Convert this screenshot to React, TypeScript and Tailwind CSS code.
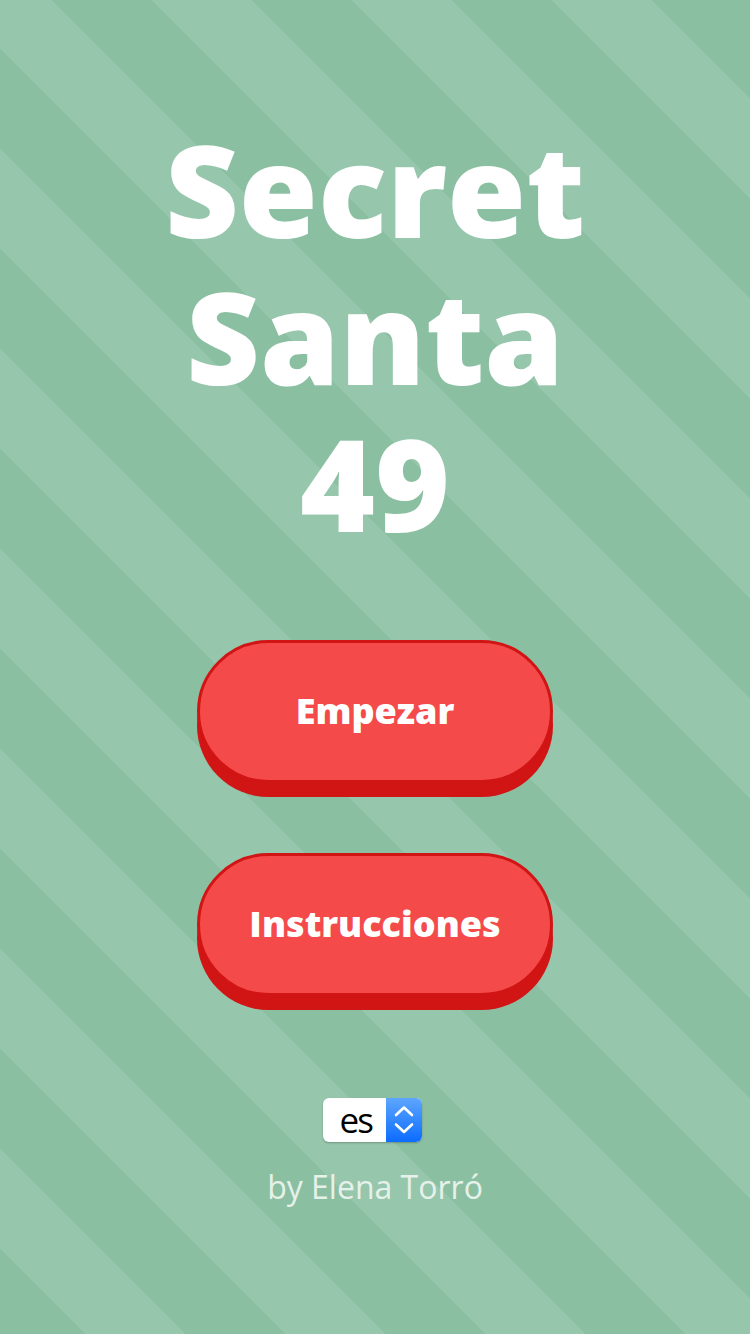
const stripes =
  "bg-[repeating-linear-gradient(45deg,#8bbfa2_0px,#8bbfa2_60.8px,#96c6ac_60.8px,#96c6ac_131.5px,#8bbfa2_131.5px,#8bbfa2_141.42px)]";

function MenuButton({ label }: { label: string }) {
  return (
    <button className="flex h-[143px] w-[356px] items-center justify-center rounded-full border-[3px] border-[#d11414] bg-[#f44a4a] pb-[2px] text-[36px] font-extrabold text-white shadow-[0_14px_0_#d11414]">
      {label}
    </button>
  );
}

function LangSelect() {
  return (
    <div className="relative mr-[6px] h-[44px] w-[99px] overflow-hidden rounded-[6px] bg-white shadow-[0_1px_2px_rgba(0,0,0,0.25)]">
      <select
        defaultValue="es"
        className="h-full w-full appearance-none bg-transparent pl-[17px] pb-[2px] text-[35px] leading-none tracking-[-2px] text-black outline-none"
      >
        <option value="es">es</option>
        <option value="en">en</option>
      </select>
      <div className="pointer-events-none absolute right-0 top-0 flex h-full w-[36px] items-center justify-center bg-[linear-gradient(#5ea6ff,#0b6cff)]">
        <svg width="20" height="30" viewBox="0 0 20 30" fill="none" stroke="white" strokeWidth="2.6" strokeLinecap="round" strokeLinejoin="round">
          <path d="M2 10 L10 2.5 L18 10" />
          <path d="M2 19.5 L10 27 L18 19.5" />
        </svg>
      </div>
    </div>
  );
}

export default function App() {
  return (
    <div className={`min-h-screen w-full ${stripes} font-['Open_Sans',sans-serif]`}>
      <div className="flex flex-col items-center pt-[115px]">
        <h1 className="text-center text-[128px] font-extrabold leading-[147px] text-white">
          Secret
          <br />
          Santa
          <br />
          49
        </h1>

        <div className="mt-[84px] flex flex-col items-center gap-[70px]">
          <MenuButton label="Empezar" />
          <MenuButton label="Instrucciones" />
        </div>

        <div className="mt-[102px]">
          <LangSelect />
        </div>

        <p className="mt-[21px] text-[32px] leading-[48px] text-[#e6f1ea]">by Elena Torró</p>
      </div>
    </div>
  );
}
